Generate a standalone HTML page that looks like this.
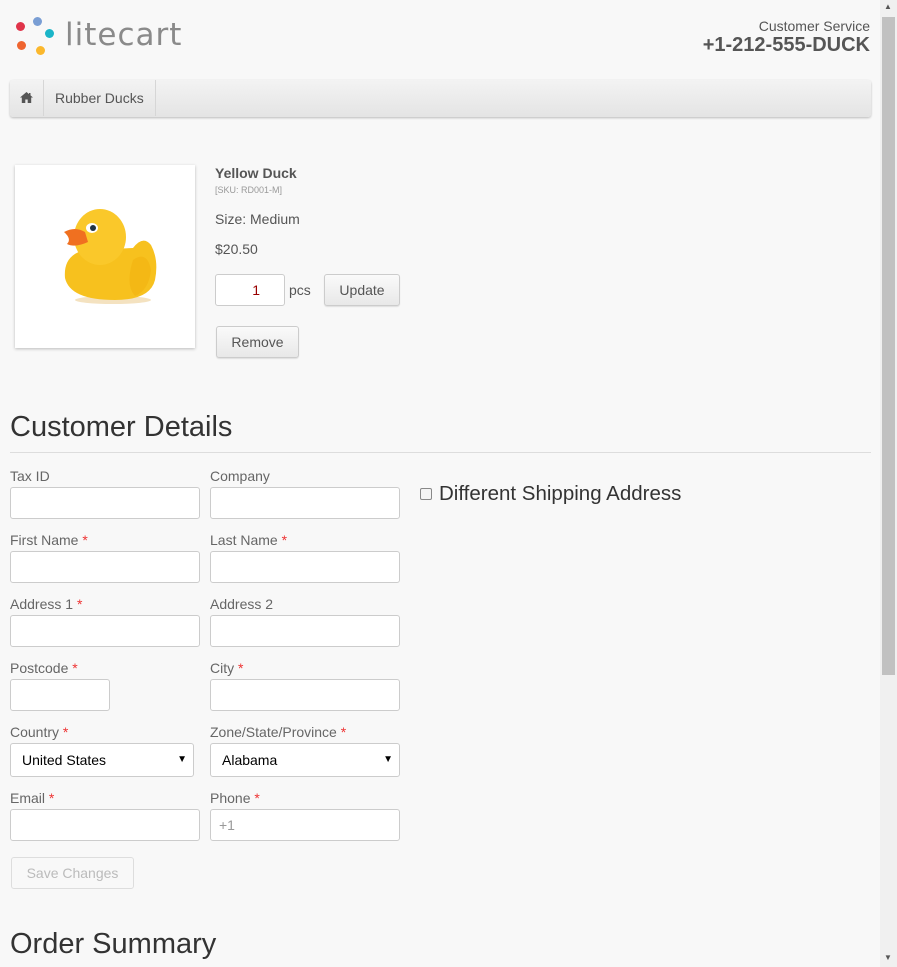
<!DOCTYPE html>
<html><head><meta charset="utf-8"><style>
*{box-sizing:border-box;margin:0;padding:0}
body{width:897px;height:967px;overflow:hidden;background:#f8f8f8;font-family:"Liberation Sans",sans-serif;color:#555;position:relative;font-size:14px}
.a{position:absolute}
.lbl{position:absolute;font-size:14px;color:#666}
.lbl i{color:#e33;font-style:normal}
.in{position:absolute;height:32px;background:#fff;border:1px solid #ccc;border-radius:3px;font-size:14px;color:#999;padding:7px 8px}
.sel{position:absolute;height:34px;background:#fff;border:1px solid #ccc;border-radius:3px;font-size:14px;color:#000;padding:8px 11px}
.sel:after{content:"▼";position:absolute;right:6px;top:10px;font-size:10px}
.btn{position:absolute;border:1px solid #ccc;border-radius:3px;background:linear-gradient(#fafafa,#e8e8e8);font-size:14px;color:#555;text-align:center;box-shadow:0 1px 1px rgba(0,0,0,.1)}
</style></head><body>
<div class="a" style="left:880px;top:0;width:17px;height:967px;background:#f0f0f0"></div>
<div class="a" style="left:882px;top:17px;width:13px;height:658px;background:#c1c1c1"></div>
<div class="a" style="left:884px;top:2px;font-size:8px;color:#555">▲</div>
<div class="a" style="left:884px;top:953px;font-size:8px;color:#555">▼</div>

<div class="a" style="left:16px;top:22px;width:9px;height:9px;border-radius:50%;background:#e0344a"></div>
<div class="a" style="left:33px;top:17px;width:9px;height:9px;border-radius:50%;background:#7a9ed4"></div>
<div class="a" style="left:45px;top:29px;width:9px;height:9px;border-radius:50%;background:#1bb5c8"></div>
<div class="a" style="left:17px;top:41px;width:9px;height:9px;border-radius:50%;background:#ef6530"></div>
<div class="a" style="left:36px;top:46px;width:9px;height:9px;border-radius:50%;background:#fbb82d"></div>
<div class="a" style="left:65px;top:17px;font-size:31px;color:#8a8a8a;letter-spacing:1px;font-family:'DejaVu Sans',sans-serif">litecart</div>

<div class="a" style="right:27px;top:18px;font-size:14px;color:#555;text-align:right">Customer Service</div>
<div class="a" style="right:27px;top:34px;font-size:20px;font-weight:bold;color:#555">+1-212-555-DUCK</div>

<div class="a" style="left:10px;top:80px;width:861px;height:37px;border-radius:3px;background:linear-gradient(#f3f3f3,#e4e4e4);box-shadow:0 1px 2px rgba(0,0,0,.25)"></div>
<div class="a" style="left:43px;top:80px;width:1px;height:36px;background:#d6d6d6"></div>
<div class="a" style="left:155px;top:80px;width:1px;height:36px;background:#d6d6d6"></div>
<svg class="a" style="left:20px;top:92px" width="13" height="11" viewBox="0 0 13 11"><path d="M6.5 0L0 5.5h1.8V11h3.5V7.5h2.4V11h3.5V5.5H13L10.5 3.4V1H9v1.1z" fill="#555"/></svg>
<div class="a" style="left:55px;top:90px;font-size:14px;color:#555">Rubber Ducks</div>

<div class="a" style="left:15px;top:165px;width:180px;height:183px;background:#fff;box-shadow:0 1px 3px rgba(0,0,0,.25)"></div>
<svg class="a" style="left:55px;top:200px" width="110" height="110" viewBox="0 0 110 110">
<ellipse cx="58" cy="100" rx="38" ry="4" fill="#f4e2c0"/>
<path d="M10 78 Q8 55 30 50 L78 48 Q88 35 96 45 Q104 60 100 80 Q95 100 60 100 Q15 100 10 78Z" fill="#f7c11e"/>
<path d="M78 60 Q92 50 96 70 Q94 90 80 96 Q70 85 78 60Z" fill="#f4b815"/>
<ellipse cx="45" cy="37" rx="26" ry="28" fill="#fac82a"/>
<path d="M9 32 Q20 26 30 32 L33 42 Q20 48 12 44 Q17 39 9 32Z" fill="#f07020"/>
<ellipse cx="37" cy="28" rx="6" ry="5" fill="#fff"/><circle cx="38" cy="28" r="3" fill="#234"/>
</svg>

<div class="a" style="left:215px;top:165px;font-size:14px;font-weight:bold;color:#555">Yellow Duck</div>
<div class="a" style="left:215px;top:185px;font-size:9px;color:#999">[SKU: RD001-M]</div>
<div class="a" style="left:215px;top:211px;font-size:14px">Size: Medium</div>
<div class="a" style="left:215px;top:241px;font-size:14px">$20.50</div>
<div class="in" style="left:215px;top:274px;width:70px;color:#900;text-align:right;padding-right:24px">1</div>
<div class="a" style="left:289px;top:282px;font-size:14px">pcs</div>
<div class="btn" style="left:324px;top:274px;width:76px;height:32px;line-height:30px">Update</div>
<div class="btn" style="left:216px;top:326px;width:83px;height:32px;line-height:30px">Remove</div>

<div class="a" style="left:10px;top:411px;font-size:29px;color:#333">Customer Details</div>
<div class="a" style="left:10px;top:452px;width:861px;height:1px;background:#ddd"></div>

<div class="lbl" style="left:10px;top:468px">Tax ID</div>
<div class="lbl" style="left:210px;top:468px">Company</div>
<div class="in" style="left:10px;top:487px;width:190px"></div>
<div class="in" style="left:210px;top:487px;width:190px"></div>

<div class="lbl" style="left:10px;top:532px">First Name <i>*</i></div>
<div class="lbl" style="left:210px;top:532px">Last Name <i>*</i></div>
<div class="in" style="left:10px;top:551px;width:190px"></div>
<div class="in" style="left:210px;top:551px;width:190px"></div>

<div class="lbl" style="left:10px;top:596px">Address 1 <i>*</i></div>
<div class="lbl" style="left:210px;top:596px">Address 2</div>
<div class="in" style="left:10px;top:615px;width:190px"></div>
<div class="in" style="left:210px;top:615px;width:190px"></div>

<div class="lbl" style="left:10px;top:660px">Postcode <i>*</i></div>
<div class="lbl" style="left:210px;top:660px">City <i>*</i></div>
<div class="in" style="left:10px;top:679px;width:100px"></div>
<div class="in" style="left:210px;top:679px;width:190px"></div>

<div class="lbl" style="left:10px;top:724px">Country <i>*</i></div>
<div class="lbl" style="left:210px;top:724px">Zone/State/Province <i>*</i></div>
<div class="sel" style="left:10px;top:743px;width:184px">United States</div>
<div class="sel" style="left:210px;top:743px;width:190px">Alabama</div>

<div class="lbl" style="left:10px;top:790px">Email <i>*</i></div>
<div class="lbl" style="left:210px;top:790px">Phone <i>*</i></div>
<div class="in" style="left:10px;top:809px;width:190px"></div>
<div class="in" style="left:210px;top:809px;width:190px">+1</div>

<div class="btn" style="left:11px;top:857px;width:123px;height:32px;line-height:30px;color:#bbb;background:#f8f8f8;box-shadow:none;border-color:#ddd">Save Changes</div>

<div class="a" style="left:420px;top:488px;width:12px;height:12px;border:1px solid #888;border-radius:2px;background:#f4f4f4"></div>
<div class="a" style="left:439px;top:482px;font-size:20.5px;color:#333">Different Shipping Address</div>

<div class="a" style="left:10px;top:928px;font-size:29px;color:#333">Order Summary</div>
</body></html>
